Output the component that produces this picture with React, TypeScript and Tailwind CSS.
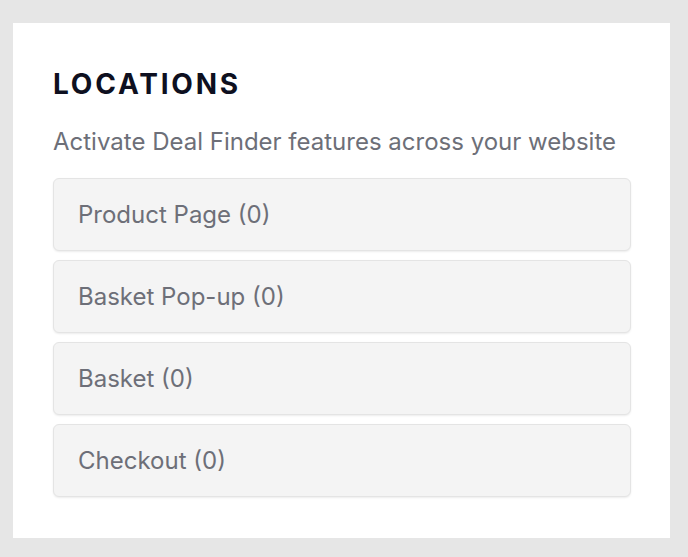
const LOCATIONS = [
  { label: "Product Page", count: 0 },
  { label: "Basket Pop-up", count: 0 },
  { label: "Basket", count: 0 },
  { label: "Checkout", count: 0 },
];

export default function App() {
  return (
    <div className="min-h-[557px] bg-[#e6e6e6] pt-[23px] pr-[18px] pb-[19px] pl-[13px] font-['Inter',sans-serif]">
      <section className="bg-white pt-[44px] pr-[39px] pb-[41px] pl-[40px]">
        <h2 className="text-[28px] leading-[34px] font-bold tracking-[0.1em] text-[#0e1020]">
          LOCATIONS
        </h2>
        <p className="mt-[26px] text-[24px] leading-[30px] text-[#6d6f78]">
          Activate Deal Finder features across your website
        </p>
        <ul className="mt-[21px] flex flex-col gap-[9px]">
          {LOCATIONS.map((l) => (
            <li
              key={l.label}
              className="flex h-[73px] items-center rounded-md border border-[#e4e4e4] bg-[#f4f4f4] pl-[24px] shadow-[0_1px_2px_rgba(0,0,0,0.08)]"
            >
              <span className="text-[24px] text-[#6d6f78]">
                {l.label} ({l.count})
              </span>
            </li>
          ))}
        </ul>
      </section>
    </div>
  );
}
